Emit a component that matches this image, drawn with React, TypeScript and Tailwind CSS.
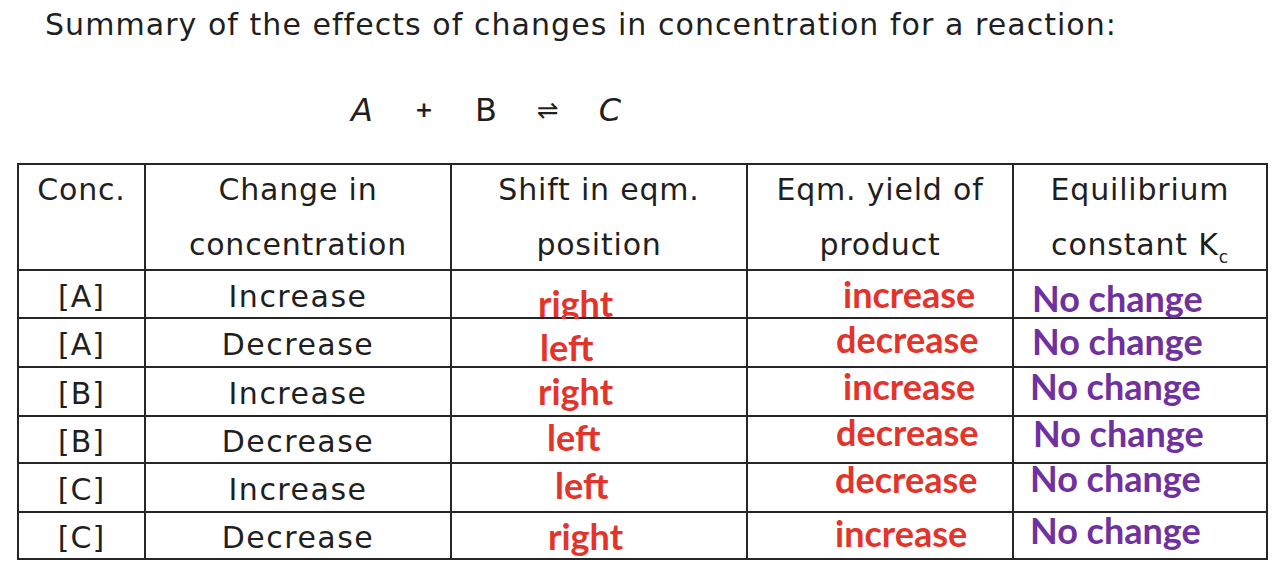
const comic = { fontFamily: '"DejaVu Sans", sans-serif' }

type Mark = { text: string; cls: string }

const rows: { conc: string; change: string; shift: Mark; yieldOf: Mark; kc: Mark }[] = [
  {
    conc: '[A]',
    change: 'Increase',
    shift: { text: 'right', cls: 'ml-[86px] mt-[14px]' },
    yieldOf: { text: 'increase', cls: 'ml-[95px] mt-[5px]' },
    kc: { text: 'No change', cls: 'ml-[18px] mt-[9px]' },
  },
  {
    conc: '[A]',
    change: 'Decrease',
    shift: { text: 'left', cls: 'ml-[88px] mt-[10px]' },
    yieldOf: { text: 'decrease', cls: 'ml-[88px] mt-[2px]' },
    kc: { text: 'No change', cls: 'ml-[18px] mt-[4px]' },
  },
  {
    conc: '[B]',
    change: 'Increase',
    shift: { text: 'right', cls: 'ml-[86px] mt-[5px]' },
    yieldOf: { text: 'increase', cls: 'ml-[95px] mt-[0px]' },
    kc: { text: 'No change', cls: 'ml-[16px] mt-[0px]' },
  },
  {
    conc: '[B]',
    change: 'Decrease',
    shift: { text: 'left', cls: 'ml-[95px] mt-[2px]' },
    yieldOf: { text: 'decrease', cls: 'ml-[88px] mt-[-3px]' },
    kc: { text: 'No change', cls: 'ml-[19px] mt-[-2px]' },
  },
  {
    conc: '[C]',
    change: 'Increase',
    shift: { text: 'left', cls: 'ml-[103px] mt-[3px]' },
    yieldOf: { text: 'decrease', cls: 'ml-[87px] mt-[-3px]' },
    kc: { text: 'No change', cls: 'ml-[16px] mt-[-4px]' },
  },
  {
    conc: '[C]',
    change: 'Decrease',
    shift: { text: 'right', cls: 'ml-[96px] mt-[5px]' },
    yieldOf: { text: 'increase', cls: 'ml-[87px] mt-[2px]' },
    kc: { text: 'No change', cls: 'ml-[16px] mt-[-1px]' },
  },
]

function Bold({ mark, color }: { mark: Mark; color: string }) {
  return (
    <div className="bg-white">
      <span
        className={`block whitespace-nowrap text-[36px] leading-none font-bold ${color} ${mark.cls}`}
        style={{ fontFamily: 'Lato, sans-serif' }}
      >
        {mark.text}
      </span>
    </div>
  )
}

function Head({ lines }: { lines: React.ReactNode[] }) {
  return (
    <div className="bg-white text-center text-[30px] leading-[55px] tracking-[0.8px] text-[#1f1f1f]">
      <div className="-mt-[3px]">
        {lines.map((l, i) => (
          <div key={i} className="whitespace-nowrap">
            {l}
          </div>
        ))}
      </div>
    </div>
  )
}

export default function App() {
  return (
    <div className="min-h-[582px] w-[1288px] bg-white text-[#1f1f1f]" style={comic}>
      <h1 className="pl-[45px] pt-[5px] text-[30px] leading-[40px] font-normal tracking-[1.05px] whitespace-nowrap">
        Summary of the effects of changes in concentration for a reaction:
      </h1>

      <div className="mt-[45px] flex pl-[331px] text-[32px] leading-[40px]">
        <span className="w-[62px] text-center italic">A</span>
        <span className="w-[62px] text-center text-[22px] font-bold">+</span>
        <span className="w-[62px] text-center">B</span>
        <span className="w-[62px] text-center text-[26px]">⇌</span>
        <span className="w-[62px] text-center italic">C</span>
      </div>

      <div className="mt-[33px] ml-[17px] grid w-[1251px] grid-cols-[125px_304px_294px_264px_252px] grid-rows-[104px_46px_47px_47px_45px_47px_45px] gap-[2px] bg-[#262626] p-[2px]">
        <Head lines={['Conc.']} />
        <Head lines={['Change in', 'concentration']} />
        <Head lines={['Shift in eqm.', 'position']} />
        <Head lines={['Eqm. yield of', 'product']} />
        <Head
          lines={[
            'Equilibrium',
            <>
              constant K<sub className="text-[17px] align-[-4px]">c</sub>
            </>,
          ]}
        />
        {rows.map((r, i) => (
          <Row key={i} r={r} />
        ))}
      </div>
    </div>
  )
}

function Row({ r }: { r: (typeof rows)[number] }) {
  return (
    <>
      <div className="flex items-center justify-center bg-white pt-[4px] text-[30px] tracking-[1px]">{r.conc}</div>
      <div className="flex items-center justify-center bg-white pt-[4px] text-[30px] tracking-[1.5px]">{r.change}</div>
      <Bold mark={r.shift} color="text-[#e3342b]" />
      <Bold mark={r.yieldOf} color="text-[#e3342b]" />
      <Bold mark={r.kc} color="text-[#7030a0]" />
    </>
  )
}
